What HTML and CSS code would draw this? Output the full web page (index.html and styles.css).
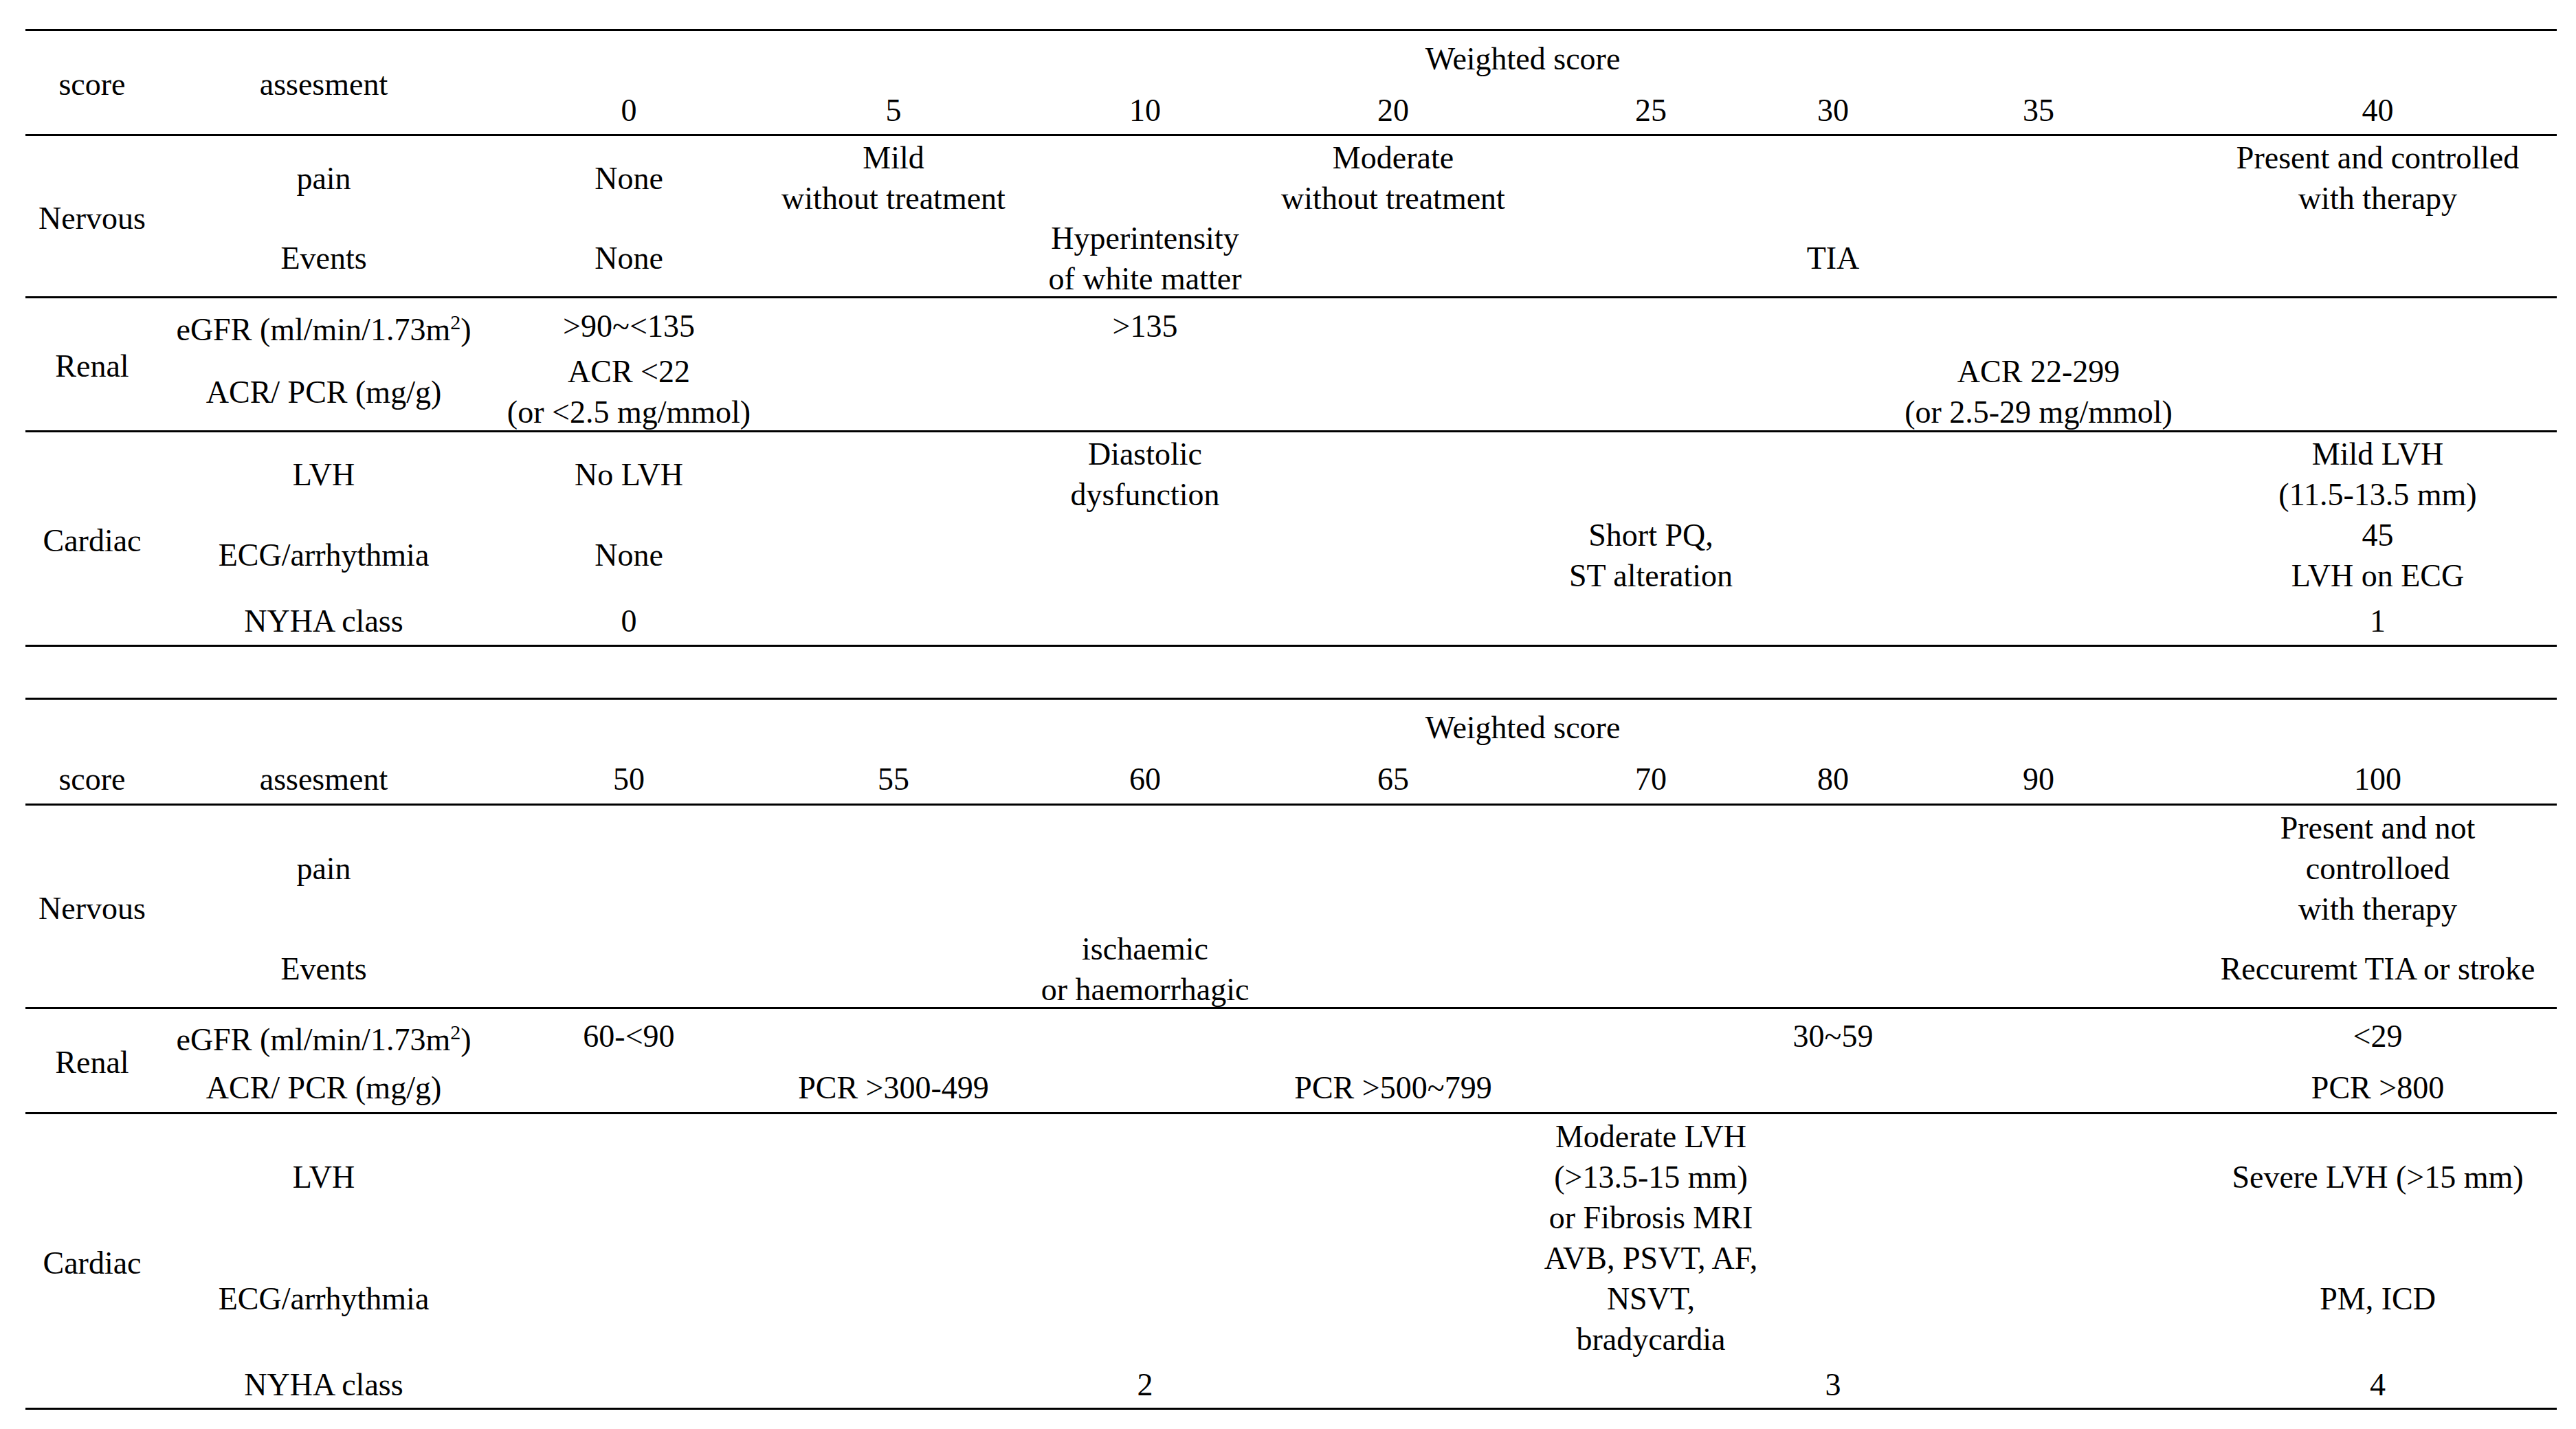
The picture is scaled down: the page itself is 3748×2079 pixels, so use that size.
FILE: index.html
```html
<!DOCTYPE html>
<html lang="en">
<head>
<meta charset="utf-8">
<title>Weighted score</title>
<link rel="stylesheet" href="styles.css">
</head>
<body>
<main class="page">

  <section class="tbl">
    <div class="sec rows-head">
      <div class="cell k1 span-12"><span class="t">score</span></div>
      <div class="cell k2 span-12"><span class="t">assesment</span></div>
      <div class="cell wide ra"><span class="t">Weighted score</span></div>
      <div class="cell k3 rb"><span class="t">0</span></div>
      <div class="cell k4 rb"><span class="t">5</span></div>
      <div class="cell k5 rb"><span class="t">10</span></div>
      <div class="cell k6 rb"><span class="t">20</span></div>
      <div class="cell k7 rb"><span class="t">25</span></div>
      <div class="cell k8 rb"><span class="t">30</span></div>
      <div class="cell k9 rb"><span class="t">35</span></div>
      <div class="cell k10 rb"><span class="t">40</span></div>
    </div>

    <div class="sec rows-nerv1">
      <div class="cell k1 span-all"><span class="t">Nervous</span></div>
      <div class="cell k2 ra"><span class="t">pain</span></div>
      <div class="cell k3 ra"><span class="t">None</span></div>
      <div class="cell k4 ra"><span class="t">Mild<br>without treatment</span></div>
      <div class="cell k6 ra"><span class="t">Moderate<br>without treatment</span></div>
      <div class="cell k10 ra"><span class="t">Present and controlled<br>with therapy</span></div>
      <div class="cell k2 rb"><span class="t">Events</span></div>
      <div class="cell k3 rb"><span class="t">None</span></div>
      <div class="cell k5 rb"><span class="t">Hyperintensity<br>of white matter</span></div>
      <div class="cell k8 rb"><span class="t">TIA</span></div>
    </div>

    <div class="sec rows-ren1">
      <div class="cell k1 span-all"><span class="t">Renal</span></div>
      <div class="cell k2 ra"><span class="t">eGFR (ml/min/1.73m<sup>2</sup>)</span></div>
      <div class="cell k3 ra"><span class="t">&gt;90~&lt;135</span></div>
      <div class="cell k5 ra"><span class="t">&gt;135</span></div>
      <div class="cell k2 rb"><span class="t">ACR/ PCR (mg/g)</span></div>
      <div class="cell k3 rb"><span class="t">ACR &lt;22<br>(or &lt;2.5 mg/mmol)</span></div>
      <div class="cell k9 rb"><span class="t">ACR 22-299<br>(or 2.5-29 mg/mmol)</span></div>
    </div>

    <div class="sec rows-card1">
      <div class="cell k1 span-all"><span class="t">Cardiac</span></div>
      <div class="cell k2 ra"><span class="t">LVH</span></div>
      <div class="cell k3 ra"><span class="t">No LVH</span></div>
      <div class="cell k5 ra"><span class="t">Diastolic<br>dysfunction</span></div>
      <div class="cell k10 ra"><span class="t">Mild LVH<br>(11.5-13.5 mm)</span></div>
      <div class="cell k2 rb"><span class="t">ECG/arrhythmia</span></div>
      <div class="cell k3 rb"><span class="t">None</span></div>
      <div class="cell k7 rb"><span class="t">Short PQ,<br>ST alteration</span></div>
      <div class="cell k10 rb"><span class="t">45<br>LVH on ECG</span></div>
      <div class="cell k2 rc"><span class="t">NYHA class</span></div>
      <div class="cell k3 rc"><span class="t">0</span></div>
      <div class="cell k10 rc"><span class="t">1</span></div>
    </div>
  </section>

  <section class="tbl tbl-second">
    <div class="sec rows-head2">
      <div class="cell wide ra"><span class="t">Weighted score</span></div>
      <div class="cell k1 rb"><span class="t">score</span></div>
      <div class="cell k2 rb"><span class="t">assesment</span></div>
      <div class="cell k3 rb"><span class="t">50</span></div>
      <div class="cell k4 rb"><span class="t">55</span></div>
      <div class="cell k5 rb"><span class="t">60</span></div>
      <div class="cell k6 rb"><span class="t">65</span></div>
      <div class="cell k7 rb"><span class="t">70</span></div>
      <div class="cell k8 rb"><span class="t">80</span></div>
      <div class="cell k9 rb"><span class="t">90</span></div>
      <div class="cell k10 rb"><span class="t">100</span></div>
    </div>

    <div class="sec rows-nerv2">
      <div class="cell k1 span-all"><span class="t">Nervous</span></div>
      <div class="cell k2 ra"><span class="t">pain</span></div>
      <div class="cell k10 ra"><span class="t">Present and not<br>controlloed<br>with therapy</span></div>
      <div class="cell k2 rb"><span class="t">Events</span></div>
      <div class="cell k5 rb"><span class="t">ischaemic<br>or haemorrhagic</span></div>
      <div class="cell k10 rb"><span class="t">Reccuremt TIA or stroke</span></div>
    </div>

    <div class="sec rows-ren2">
      <div class="cell k1 span-all"><span class="t">Renal</span></div>
      <div class="cell k2 ra"><span class="t">eGFR (ml/min/1.73m<sup>2</sup>)</span></div>
      <div class="cell k3 ra"><span class="t">60-&lt;90</span></div>
      <div class="cell k8 ra"><span class="t">30~59</span></div>
      <div class="cell k10 ra"><span class="t">&lt;29</span></div>
      <div class="cell k2 rb"><span class="t">ACR/ PCR (mg/g)</span></div>
      <div class="cell k4 rb"><span class="t">PCR &gt;300-499</span></div>
      <div class="cell k6 rb"><span class="t">PCR &gt;500~799</span></div>
      <div class="cell k10 rb"><span class="t">PCR &gt;800</span></div>
    </div>

    <div class="sec rows-card2">
      <div class="cell k1 span-all"><span class="t">Cardiac</span></div>
      <div class="cell k2 ra"><span class="t">LVH</span></div>
      <div class="cell k7 ra"><span class="t">Moderate LVH<br>(&gt;13.5-15 mm)<br>or Fibrosis MRI</span></div>
      <div class="cell k10 ra"><span class="t">Severe LVH (&gt;15 mm)</span></div>
      <div class="cell k2 rb"><span class="t">ECG/arrhythmia</span></div>
      <div class="cell k7 rb"><span class="t">AVB, PSVT, AF,<br>NSVT,<br>bradycardia</span></div>
      <div class="cell k10 rb"><span class="t">PM, ICD</span></div>
      <div class="cell k2 rc"><span class="t">NYHA class</span></div>
      <div class="cell k5 rc"><span class="t">2</span></div>
      <div class="cell k8 rc"><span class="t">3</span></div>
      <div class="cell k10 rc"><span class="t">4</span></div>
    </div>
  </section>

</main>
</body>
</html>
```

FILE: styles.css
```css
html, body {
  margin: 0;
  padding: 0;
  background: #ffffff;
}

body {
  color: #000000;
  font-family: "Liberation Serif", "Times New Roman", serif;
  font-size: 46px;
  line-height: 59px;
}

.page {
  padding: 42px 0 0 37px;
}

.tbl {
  width: 3683px;
  border-top: 3px solid #000000;
}

.tbl-second {
  margin-top: 74px;
}

.sec {
  display: grid;
  grid-template-columns: 194px 480px 408px 362px 370px 352px 398px 132px 466px 521px;
  border-bottom: 3px solid #000000;
}

.rows-head  { grid-template-rows: 75px 75px; }
.rows-nerv1 { grid-template-rows: 117px 116px; }
.rows-ren1  { grid-template-rows: 75px 117px; }
.rows-card1 { grid-template-rows: 117px 118px 74px; }

.rows-head2 { grid-template-rows: 75px 76px; }
.rows-nerv2 { grid-template-rows: 177px 116px; }
.rows-ren2  { grid-template-rows: 74px 76px; }
.rows-card2 { grid-template-rows: 177px 177px 73px; }

.cell {
  display: flex;
  align-items: center;
  justify-content: center;
  text-align: center;
  white-space: nowrap;
  min-width: 0;
  padding-top: 5px;
}

.t {
  display: block;
}

.t sup {
  font-size: 30px;
  vertical-align: super;
}

.k1  { grid-column: 1; }
.k2  { grid-column: 2; }
.k3  { grid-column: 3; }
.k4  { grid-column: 4; }
.k5  { grid-column: 5; }
.k6  { grid-column: 6; }
.k7  { grid-column: 7; }
.k8  { grid-column: 8; }
.k9  { grid-column: 9; }
.k10 { grid-column: 10; }
.wide { grid-column: 3 / 11; }

.ra { grid-row: 1; }
.rb { grid-row: 2; }
.rc { grid-row: 3; }
.span-12 { grid-row: 1 / 3; }
.span-all { grid-row: 1 / -1; }
```
